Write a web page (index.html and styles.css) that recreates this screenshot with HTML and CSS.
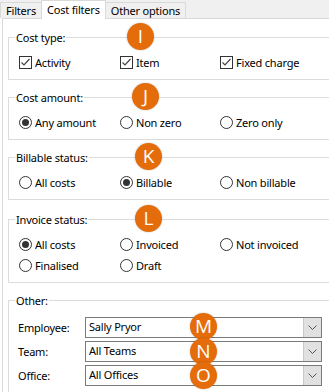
FILE: index.html
```html
<!DOCTYPE html>
<html lang="en">
<head>
    <meta charset="UTF-8">
    <meta name="viewport" content="width=device-width, initial-scale=1.0">
    <title>Cost filters</title>
    <link rel="stylesheet" href="styles.css">
</head>
<body>
    <div class="tabs">
        <div class="tab">Filters</div>
        <div class="tab active">Cost filters</div>
        <div class="tab">Other options</div>
    </div>

    <div class="panel">
        <fieldset class="group">
            <legend>Cost type:</legend>
            <div class="options">
                <label class="opt"><span class="check"><svg width="11" height="11" viewBox="0 0 11 11"><polyline points="1.5,5.5 4,8 9.5,2" fill="none" stroke="#444" stroke-width="1.2"/></svg></span>Activity</label>
                <label class="opt"><span class="check"><svg width="11" height="11" viewBox="0 0 11 11"><polyline points="1.5,5.5 4,8 9.5,2" fill="none" stroke="#444" stroke-width="1.2"/></svg></span>Item</label>
                <label class="opt"><span class="check"><svg width="11" height="11" viewBox="0 0 11 11"><polyline points="1.5,5.5 4,8 9.5,2" fill="none" stroke="#444" stroke-width="1.2"/></svg></span>Fixed charge</label>
            </div>
        </fieldset>

        <fieldset class="group">
            <legend>Cost amount:</legend>
            <div class="options">
                <label class="opt"><span class="radio on"></span>Any amount</label>
                <label class="opt"><span class="radio"></span>Non zero</label>
                <label class="opt"><span class="radio"></span>Zero only</label>
            </div>
        </fieldset>

        <fieldset class="group">
            <legend>Billable status:</legend>
            <div class="options">
                <label class="opt"><span class="radio"></span>All costs</label>
                <label class="opt"><span class="radio on"></span>Billable</label>
                <label class="opt"><span class="radio"></span>Non billable</label>
            </div>
        </fieldset>

        <fieldset class="group group-invoice">
            <legend>Invoice status:</legend>
            <div class="options">
                <label class="opt"><span class="radio on"></span>All costs</label>
                <label class="opt"><span class="radio"></span>Invoiced</label>
                <label class="opt"><span class="radio"></span>Not invoiced</label>
                <label class="opt"><span class="radio"></span>Finalised</label>
                <label class="opt"><span class="radio"></span>Draft</label>
            </div>
        </fieldset>

        <fieldset class="group">
            <legend>Other:</legend>
            <div class="fields">
                <span class="field-label">Employee:</span>
                <div class="select"><span class="value">Sally Pryor</span><span class="drop"><svg width="9" height="5" viewBox="0 0 9 5"><polyline points="0.5,0.5 4.5,4.5 8.5,0.5" fill="none" stroke="#555" stroke-width="1"/></svg></span></div>
                <span class="field-label">Team:</span>
                <div class="select"><span class="value">All Teams</span><span class="drop"><svg width="9" height="5" viewBox="0 0 9 5"><polyline points="0.5,0.5 4.5,4.5 8.5,0.5" fill="none" stroke="#555" stroke-width="1"/></svg></span></div>
                <span class="field-label">Office:</span>
                <div class="select"><span class="value">All Offices</span><span class="drop"><svg width="9" height="5" viewBox="0 0 9 5"><polyline points="0.5,0.5 4.5,4.5 8.5,0.5" fill="none" stroke="#555" stroke-width="1"/></svg></span></div>
            </div>
        </fieldset>
    </div>

    <!-- callout markers -->
    <span class="badge badge-i">I</span>
    <span class="badge badge-j">J</span>
    <span class="badge badge-k">K</span>
    <span class="badge badge-l">L</span>
    <span class="badge badge-m">M</span>
    <span class="badge badge-n">N</span>
    <span class="badge badge-o">O</span>
</body>
</html>
```

FILE: styles.css
```css
body {
    margin: 0;
    width: 329px;
    height: 392px;
    overflow: hidden;
    position: relative;
    background-color: #fff;
    font-family: "Noto Sans", sans-serif;
    font-size: 11px;
    letter-spacing: -0.2px;
    color: #000;
}
.tabs {
    display: flex;
    align-items: flex-end;
    height: 18px;
    background-color: #f0f0f0;
}
.tab {
    height: 16px;
    line-height: 15px;
    padding: 0 5px;
    border: 1px solid #d9d9d9;
    border-bottom: none;
    box-sizing: border-box;
    margin-right: -1px;
}
.tab.active {
    height: 19px;
    line-height: 17px;
    background-color: #fff;
    margin-bottom: -1px;
    position: relative;
    z-index: 1;
}
.panel {
    margin-left: 2px;
    width: 327px;
    box-sizing: border-box;
    border-left: 1px solid #d9d9d9;
    border-top: 1px solid #d9d9d9;
    padding: 11px 0 0 5px;
}
.group {
    margin: 0 0 10px;
    padding: 9px 0 9px 10px;
    border: 1px solid #dcdcdc;
    border-right: none;
    min-width: 0;
}
.group-invoice {
    margin-top: 12px;
}
.group legend {
    margin-left: -4px;
    padding: 0 1px;
    line-height: 15px;
}
.options {
    display: grid;
    grid-template-columns: 101px 100px 100px;
    row-gap: 5px;
}
.opt {
    display: flex;
    align-items: center;
    height: 16px;
    white-space: nowrap;
}
.check,
.radio {
    width: 13px;
    height: 13px;
    box-sizing: border-box;
    border: 1px solid #333;
    background-color: #fff;
    margin-right: 3px;
    flex-shrink: 0;
    display: flex;
    align-items: center;
    justify-content: center;
}
.radio {
    border-radius: 50%;
}
.radio.on::after {
    content: "";
    width: 7px;
    height: 7px;
    border-radius: 50%;
    background-color: #333;
}
.fields {
    display: grid;
    grid-template-columns: 66px 237px;
    row-gap: 3px;
    align-items: center;
}
.field-label {
    margin-left: -1px;
}
.select {
    display: flex;
    height: 21px;
    box-sizing: border-box;
    border: 1px solid #7a7a7a;
    background-color: #fff;
}
.select .value {
    flex: 1;
    padding-left: 3px;
    line-height: 18px;
}
.select .drop {
    width: 17px;
    background-color: #e1e1e1;
    border-left: 1px solid #c8c8c8;
    display: flex;
    align-items: center;
    justify-content: center;
}
.badge {
    position: absolute;
    width: 27px;
    height: 27px;
    border-radius: 50%;
    background-color: #e46c0a;
    color: #fff;
    font-family: "Open Sans", sans-serif;
    font-size: 19px;
    letter-spacing: 0;
    line-height: 27px;
    text-align: center;
    box-shadow: 0 0 2px rgba(0, 0, 0, 0.25);
}
.badge-i { left: 127px; top: 23px; }
.badge-j { left: 132px; top: 83px; }
.badge-k { left: 135px; top: 143px; }
.badge-l { left: 135px; top: 205px; }
.badge-m { left: 190px; top: 313px; }
.badge-n { left: 190px; top: 338px; }
.badge-o { left: 190px; top: 362px; }
```
